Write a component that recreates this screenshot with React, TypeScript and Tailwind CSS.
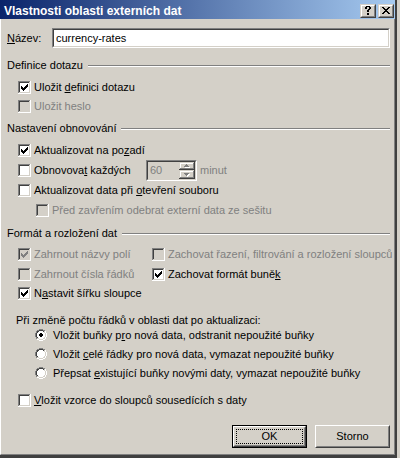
import React from "react";

type CkProps = { checked?: boolean; disabled?: boolean };

function Check({ checked, disabled }: CkProps) {
  const tops = [2, 3, 4, 3, 2, 1, 0];
  return (
    <svg width="13" height="13" viewBox="0 0 13 13" shapeRendering="crispEdges" className="block shrink-0">
      <rect x="0" y="0" width="13" height="13" fill="#ffffff" />
      <rect x="0" y="0" width="12" height="1" fill="#808080" />
      <rect x="0" y="0" width="1" height="12" fill="#808080" />
      <rect x="1" y="1" width="10" height="1" fill="#404040" />
      <rect x="1" y="1" width="1" height="10" fill="#404040" />
      <rect x="11" y="1" width="1" height="11" fill="#d4d0c8" />
      <rect x="1" y="11" width="11" height="1" fill="#d4d0c8" />
      <rect x="2" y="2" width="9" height="9" fill={disabled ? "#d4d0c8" : "#ffffff"} />
      {checked &&
        tops.map((t, i) => (
          <rect key={i} x={3 + i} y={3 + t} width="1" height="3" fill={disabled ? "#808080" : "#000000"} />
        ))}
    </svg>
  );
}

function Radio({ checked }: { checked?: boolean }) {
  const outer: Record<number, number[]> = {
    0: [4, 5, 6, 7], 1: [2, 3, 8, 9], 2: [1, 10], 3: [1, 10], 4: [0, 11], 5: [0, 11],
    6: [0, 11], 7: [0, 11], 8: [1, 10], 9: [1, 10], 10: [2, 3, 8, 9], 11: [4, 5, 6, 7],
  };
  const inner: Record<number, number[]> = {
    1: [4, 5, 6, 7], 2: [2, 3, 8, 9], 3: [2, 9], 4: [1, 10], 5: [1, 10], 6: [1, 10],
    7: [1, 10], 8: [2, 9], 9: [2, 3, 8, 9], 10: [4, 5, 6, 7],
  };
  const fill: Record<number, [number, number]> = {
    2: [4, 7], 3: [3, 8], 4: [2, 9], 5: [2, 9], 6: [2, 9], 7: [2, 9], 8: [3, 8], 9: [4, 7],
  };
  const dot: Record<number, number[]> = { 4: [5, 6], 5: [4, 5, 6, 7], 6: [4, 5, 6, 7], 7: [5, 6] };
  const els: React.ReactElement[] = [];
  Object.entries(fill).forEach(([y, [a, b]]) => {
    els.push(<rect key={`f${y}`} x={a} y={Number(y)} width={b - a + 1} height={1} fill="#ffffff" />);
  });
  Object.entries(outer).forEach(([ys, xs]) => {
    const y = Number(ys);
    xs.forEach((x) =>
      els.push(<rect key={`o${x}-${y}`} x={x} y={y} width={1} height={1} fill={x + y < 11 ? "#808080" : "#ffffff"} />)
    );
  });
  Object.entries(inner).forEach(([ys, xs]) => {
    const y = Number(ys);
    xs.forEach((x) =>
      els.push(<rect key={`i${x}-${y}`} x={x} y={y} width={1} height={1} fill={x + y < 11 ? "#404040" : "#d4d0c8"} />)
    );
  });
  if (checked) {
    Object.entries(dot).forEach(([ys, xs]) => {
      const y = Number(ys);
      xs.forEach((x) => els.push(<rect key={`d${x}-${y}`} x={x} y={y} width={1} height={1} fill="#000000" />));
    });
  }
  return (
    <svg width="12" height="12" viewBox="0 0 12 12" shapeRendering="crispEdges" className="block shrink-0">
      {els}
    </svg>
  );
}

function PixelArt({ rows, color }: { rows: string[]; color: string }) {
  const els: React.ReactElement[] = [];
  rows.forEach((r, y) =>
    r.split("").forEach((c, x) => {
      if (c === "X") els.push(<rect key={`${x}-${y}`} x={x} y={y} width={1} height={1} fill={color} />);
    })
  );
  return (
    <svg width={rows[0].length} height={rows.length} shapeRendering="crispEdges" className="block">
      {els}
    </svg>
  );
}

function Spinner() {
  const els: React.ReactElement[] = [];
  const btn = (y0: number, h: number, up: boolean) => {
    const w = 16;
    const k = `b${y0}`;
    els.push(<rect key={k + "bg"} x={0} y={y0} width={w} height={h} fill="#d4d0c8" />);
    els.push(<rect key={k + "w1"} x={1} y={y0 + 1} width={w - 3} height={1} fill="#ffffff" />);
    els.push(<rect key={k + "w2"} x={1} y={y0 + 1} width={1} height={h - 3} fill="#ffffff" />);
    els.push(<rect key={k + "g1"} x={w - 2} y={y0 + 1} width={1} height={h - 2} fill="#808080" />);
    els.push(<rect key={k + "g2"} x={1} y={y0 + h - 2} width={w - 2} height={1} fill="#808080" />);
    els.push(<rect key={k + "d1"} x={w - 1} y={y0} width={1} height={h} fill="#404040" />);
    els.push(<rect key={k + "d2"} x={0} y={y0 + h - 1} width={w} height={1} fill="#404040" />);
    const ay = y0 + Math.floor((h - 3) / 2);
    const rows: [number, number][] = up ? [[2, 1], [1, 3], [0, 5]] : [[0, 5], [1, 3], [2, 1]];
    rows.forEach(([dx, len], i) => {
      els.push(<rect key={k + "s" + i} x={5 + dx + 1} y={ay + i + 1} width={len} height={1} fill="#ffffff" />);
    });
    rows.forEach(([dx, len], i) => {
      els.push(<rect key={k + "a" + i} x={5 + dx} y={ay + i} width={len} height={1} fill="#808080" />);
    });
  };
  btn(0, 8, true);
  btn(8, 9, false);
  return (
    <svg width="16" height="17" viewBox="0 0 16 17" shapeRendering="crispEdges" className="block shrink-0">
      {els}
    </svg>
  );
}

function CapBtn({ children }: { children: React.ReactNode }) {
  return (
    <div className="w-[16px] h-[14px] border border-t-[#d4d0c8] border-l-[#d4d0c8] border-r-[#404040] border-b-[#404040]">
      <div className="h-full border border-t-white border-l-white border-r-[#808080] border-b-[#808080] bg-[#d4d0c8]">
        {children}
      </div>
    </div>
  );
}

function CbRow({
  checked,
  disabled,
  children,
  className,
}: CkProps & { children: React.ReactNode; className?: string }) {
  return (
    <div className={"flex items-center h-[13px] " + (className || "")}>
      <Check checked={checked} disabled={disabled} />
      <span className={"ml-[3px] whitespace-nowrap " + (disabled ? "text-[#808080]" : "")}>{children}</span>
    </div>
  );
}

function RadioRow({ checked, children, className }: { checked?: boolean; children: React.ReactNode; className?: string }) {
  return (
    <div className={"flex items-start h-[13px] ml-[28px] " + (className || "")}>
      <Radio checked={checked} />
      <span className="ml-[6px] whitespace-nowrap">{children}</span>
    </div>
  );
}

function Header({ children, className }: { children: React.ReactNode; className?: string }) {
  return (
    <div className={"flex h-[13px] " + (className || "")}>
      <span className="whitespace-nowrap">{children}</span>
      <div className="flex-1 ml-[5px] mt-[6px] h-[2px] border-t border-b border-t-[#808080] border-b-white" />
    </div>
  );
}

function U({ children }: { children: React.ReactNode }) {
  return <span className="underline">{children}</span>;
}

export default function App() {
  return (
    <div className="w-[400px] h-[458px] bg-[#d4d0c8] flex overflow-hidden font-['Liberation_Sans',Arial,sans-serif] text-[11px] leading-[13px] text-black">
      <div className="w-[397px] h-[458px] shrink-0 flex flex-col border-r-2 border-r-[#404040] border-b-[3px] border-b-[#404040]">
        {/* Title bar */}
        <div className="h-[19px] shrink-0 flex items-start bg-[linear-gradient(to_right,#0a246a,#a6caf0)]">
          <span className="pl-[4px] pt-[5px] text-[12px] leading-[13px] font-bold text-white whitespace-nowrap">
            Vlastnosti oblasti externích dat
          </span>
          <div className="ml-auto mt-[4px] mr-[1px] flex gap-[2px]">
            <CapBtn>
              <div className="ml-[3px]">
                <PixelArt
                  color="#000000"
                  rows={[".XXXX.", "XX..XX", "XX..XX", "...XX.", "..XX..", "..XX..", "......", "..XX..", "..XX.."]}
                />
              </div>
            </CapBtn>
            <CapBtn>
              <div className="ml-[2px] mt-[1px]">
                <PixelArt
                  color="#000000"
                  rows={["XX....XX", ".XX..XX.", "..XXXX..", "...XX...", "..XXXX..", ".XX..XX.", "XX....XX"]}
                />
              </div>
            </CapBtn>
          </div>
        </div>

        {/* Body */}
        <div className="flex-1 flex flex-col bg-[#d4d0c8] border-l border-l-white border-r border-r-[#808080] border-b border-b-[#808080] pl-[6px] pr-[4px]">
          {/* Name */}
          <div className="mt-[9px] h-[20px] flex items-center">
            <span className="w-[45px] shrink-0 whitespace-nowrap">
              <U>N</U>ázev:
            </span>
            <div className="flex-1 h-[20px] border border-t-[#808080] border-l-[#808080] border-r-white border-b-white">
              <div className="h-full border border-t-[#404040] border-l-[#404040] border-r-[#d4d0c8] border-b-[#d4d0c8] bg-white flex items-center pl-[2px]">
                <span className="whitespace-nowrap">currency-rates</span>
              </div>
            </div>
          </div>

          <Header className="mt-[11px]">Definice dotazu</Header>
          <CbRow checked className="mt-[9px] ml-[11px]">
            Uložit <U>d</U>efinici dotazu
          </CbRow>
          <CbRow disabled className="mt-[6px] ml-[11px]">
            Uložit heslo
          </CbRow>

          <Header className="mt-[9px]">Nastavení obnovování</Header>
          <CbRow checked className="mt-[9px] ml-[11px]">
            Aktualizovat na po<U>z</U>adí
          </CbRow>
          <div className="mt-[3px] ml-[11px] h-[21px] flex items-center">
            <Check />
            <span className="ml-[3px] w-[112px] shrink-0 whitespace-nowrap">
              Obnovova<U>t</U> každých
            </span>
            <div className="w-[51px] h-[21px] shrink-0 border border-t-[#808080] border-l-[#808080] border-r-white border-b-white">
              <div className="h-full flex border border-t-[#404040] border-l-[#404040] border-r-[#d4d0c8] border-b-[#d4d0c8] bg-[#d4d0c8]">
                <span className="flex-1 pl-[2px] self-center text-[#808080]">60</span>
                <Spinner />
              </div>
            </div>
            <span className="ml-[3px] text-[#808080] whitespace-nowrap">minut</span>
          </div>
          <CbRow className="mt-[3px] ml-[11px]">
            Aktualizovat data při <U>o</U>tevření souboru
          </CbRow>
          <CbRow disabled className="mt-[7px] ml-[29px]">
            Před zavřením odebrat externí data ze sešitu
          </CbRow>

          <Header className="mt-[10px]">Formát a rozložení dat</Header>
          <div className="mt-[8px] ml-[11px] flex">
            <CbRow checked disabled className="w-[134px] shrink-0">
              Zahrnout názvy polí
            </CbRow>
            <CbRow disabled>Zachovat řazení, filtrování a rozložení sloupců</CbRow>
          </div>
          <div className="mt-[7px] ml-[11px] flex">
            <CbRow disabled className="w-[134px] shrink-0">
              Zahrnout čísla řádků
            </CbRow>
            <CbRow checked>
              Zachovat formát buně<U>k</U>
            </CbRow>
          </div>
          <CbRow checked className="mt-[6px] ml-[11px]">
            N<U>a</U>stavit šířku sloupce
          </CbRow>

          <div className="mt-[14px] ml-[9px] h-[13px] whitespace-nowrap">
            Při změně počtu řádků v oblasti dat po aktualizaci:
          </div>
          <RadioRow checked className="mt-[2px]">
            Vložit buňky p<U>r</U>o nová data, odstranit nepoužité buňky
          </RadioRow>
          <RadioRow className="mt-[6px]">
            Vložit <U>c</U>elé řádky pro nová data, vymazat nepoužité buňky
          </RadioRow>
          <RadioRow className="mt-[6px]">
            Přepsat <U>e</U>xistující buňky novými daty, vymazat nepoužité buňky
          </RadioRow>

          <CbRow className="mt-[14px] ml-[11px]">
            <U>V</U>ložit vzorce do sloupců sousedících s daty
          </CbRow>

          {/* Buttons */}
          <div className="mt-[18px] flex justify-end gap-[8px]">
            <div className="w-[75px] h-[23px] border border-black">
              <div className="h-full border border-t-white border-l-white border-r-[#404040] border-b-[#404040]">
                <div className="h-full flex border border-t-[#d4d0c8] border-l-[#d4d0c8] border-r-[#808080] border-b-[#808080]">
                  <div className="flex-1 m-[1px] border border-dotted border-black flex items-center justify-center">
                    OK
                  </div>
                </div>
              </div>
            </div>
            <div className="w-[75px] h-[23px] border border-t-white border-l-white border-r-[#404040] border-b-[#404040]">
              <div className="h-full flex items-center justify-center border border-t-[#d4d0c8] border-l-[#d4d0c8] border-r-[#808080] border-b-[#808080]">
                Storno
              </div>
            </div>
          </div>
        </div>
      </div>
    </div>
  );
}
